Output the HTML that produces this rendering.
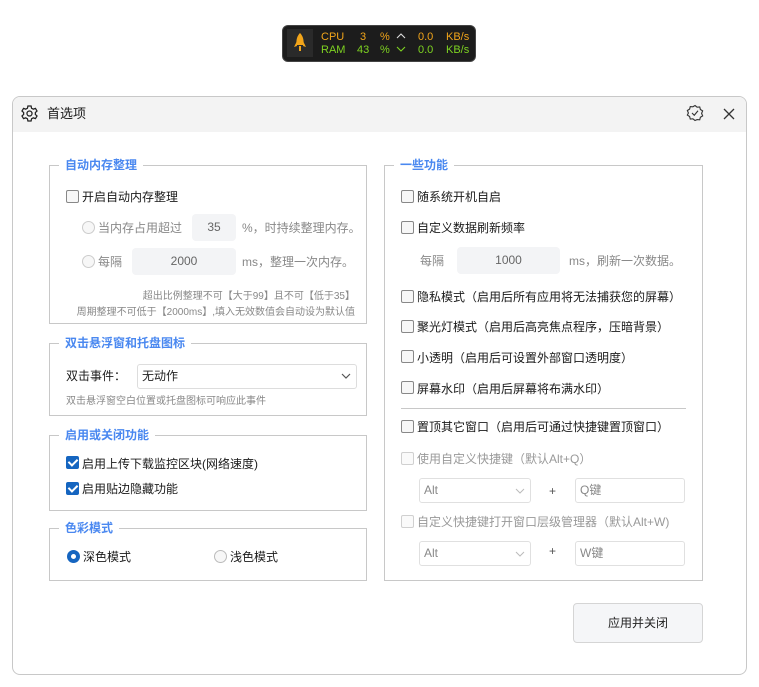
<!DOCTYPE html>
<html><head><meta charset="utf-8"><style>
*{margin:0;padding:0;box-sizing:border-box}
body{width:759px;height:687px;background:#fff;position:relative;overflow:hidden;font-family:"Liberation Sans","Noto Sans CJK SC",sans-serif;font-size:12px;color:#1a1a1a}
.a{position:absolute;white-space:nowrap}
.t{position:absolute;white-space:nowrap;line-height:16px;transform:translateY(-8px)}
.box{position:absolute;border:1px solid #c8c8c8}
.lg{position:absolute;background:#fff;color:#4a88f0;padding:0 6px;line-height:16px;font-size:12px;font-weight:bold}
.cb{position:absolute;width:13px;height:13px;border:1px solid #888;border-radius:2px;background:#f7f7f7}
.cb.d{border-color:#d0d0d0;background:#fafafa}
.cb.on{background:#1565c0;border-color:#1565c0}
.cb.on::after{content:"";position:absolute;left:3px;top:0px;width:4px;height:7px;border:solid #fff;border-width:0 2px 2px 0;transform:rotate(45deg)}
.rd{position:absolute;width:13px;height:13px;border:1px solid #bbb;border-radius:50%;background:#f7f7f7}
.in{position:absolute;background:#f3f4f6;border-radius:4px;color:#666;text-align:center;font-size:12px}
.g{color:#888}
.sel{position:absolute;border:1px solid #e0e0e0;border-radius:3px;background:#fff;color:#888;padding-left:4px}
</style></head><body>
<!-- widget -->
<div class="a" style="left:282px;top:25px;width:194px;height:37px;background:#1c1c1c;border-radius:6px;border:1px solid #444"></div>
<div class="a" style="left:287px;top:29px;width:26px;height:28px;background:#2a2a2a"></div>
<svg class="a" style="left:292px;top:32px" width="16" height="22" viewBox="0 0 16 22"><path d="M8 1 C11 4 12 8 11.5 13 L4.5 13 C4 8 5 4 8 1Z" fill="#f2a51a"/><path d="M4.5 10 L2 15 L5 14Z M11.5 10 L14 15 L11 14Z" fill="#f2a51a"/><rect x="7" y="14" width="2" height="5" fill="#f2a51a"/></svg>
<div class="t" style="left:321px;top:37px;color:#f2a51a;font-size:11px">CPU</div>
<div class="t" style="left:360px;top:37px;color:#f2a51a;font-size:11px">3</div>
<div class="t" style="left:380px;top:37px;color:#f2a51a;font-size:11px">%</div>
<svg class="a" style="left:396px;top:33px" width="10" height="6" viewBox="0 0 10 6"><path d="M1 5l4-4 4 4" fill="none" stroke="#ddd" stroke-width="1.1"/></svg>
<div class="t" style="left:418px;top:37px;color:#f2a51a;font-size:11px">0.0</div>
<div class="t" style="left:446px;top:37px;color:#f2a51a;font-size:11px">KB/s</div>
<div class="t" style="left:321px;top:50px;color:#7ed321;font-size:11px">RAM</div>
<div class="t" style="left:357px;top:50px;color:#7ed321;font-size:11px">43</div>
<div class="t" style="left:380px;top:50px;color:#7ed321;font-size:11px">%</div>
<svg class="a" style="left:396px;top:46px" width="10" height="6" viewBox="0 0 10 6"><path d="M1 1l4 4 4-4" fill="none" stroke="#7ed321" stroke-width="1.1"/></svg>
<div class="t" style="left:418px;top:50px;color:#7ed321;font-size:11px">0.0</div>
<div class="t" style="left:446px;top:50px;color:#7ed321;font-size:11px">KB/s</div>

<!-- dialog -->
<div class="a" style="left:12px;top:96px;width:735px;height:579px;border:1px solid #c8c8c8;border-radius:8px;overflow:hidden">
<div style="height:35px;background:#f3f3f3"></div></div>
<svg class="a" style="left:20px;top:104px" width="19" height="19" viewBox="0 0 24 24" fill="none" stroke="#222" stroke-width="1.6"><path d="M10 2.5h4l.6 2.8 2.2 1.2 2.7-1 2 3.4-2.1 1.9v2.4l2.1 1.9-2 3.4-2.7-1-2.2 1.2-.6 2.8h-4l-.6-2.8-2.2-1.2-2.7 1-2-3.4 2.1-1.9v-2.4L2.5 8.9l2-3.4 2.7 1 2.2-1.2z"/><circle cx="12" cy="12" r="3.2"/></svg>
<div class="t" style="left:47px;top:114px;font-size:13px">首选项</div>
<svg class="a" style="left:686px;top:104px" width="18" height="18" viewBox="0 0 24 24" fill="none" stroke="#333" stroke-width="1.5"><path d="M12 2l2.8 2.2 3.5-.3.9 3.4 3 1.9-1.4 3.3 1.4 3.3-3 1.9-.9 3.4-3.5-.3L12 22l-2.8-2.2-3.5.3-.9-3.4-3-1.9L3.2 12 1.8 8.7l3-1.9.9-3.4 3.5.3z"/><path d="M8 12l3 3 5-6"/></svg>
<svg class="a" style="left:723px;top:108px" width="12" height="12" viewBox="0 0 12 12" stroke="#333" stroke-width="1.3"><path d="M1 1L11 11M11 1L1 11"/></svg>

<!-- group 1 -->
<div class="box" style="left:49px;top:165px;width:318px;height:159px"></div>
<div class="lg" style="left:59px;top:157px">自动内存整理</div>
<div class="cb" style="left:66px;top:190px"></div>
<div class="t" style="left:82px;top:197px">开启自动内存整理</div>
<div class="rd" style="left:82px;top:221px;border-color:#ccc"></div>
<div class="t g" style="left:98px;top:228px">当内存占用超过</div>
<div class="in" style="left:192px;top:214px;width:44px;height:27px;line-height:27px">35</div>
<div class="t g" style="left:242px;top:228px">%，时持续整理内存。</div>
<div class="rd" style="left:82px;top:255px;border-color:#ccc"></div>
<div class="t g" style="left:98px;top:262px">每隔</div>
<div class="in" style="left:132px;top:248px;width:104px;height:27px;line-height:27px">2000</div>
<div class="t g" style="left:242px;top:262px">ms，整理一次内存。</div>
<div class="t g" style="right:404px;top:297px;font-size:10px">超出比例整理不可【大于99】且不可【低于35】</div>
<div class="t g" style="right:404px;top:313px;font-size:10px">周期整理不可低于【2000ms】,填入无效数值会自动设为默认值</div>

<!-- group 2 -->
<div class="box" style="left:49px;top:343px;width:318px;height:73px"></div>
<div class="lg" style="left:59px;top:335px">双击悬浮窗和托盘图标</div>
<div class="t" style="left:66px;top:376px">双击事件：</div>
<div class="sel" style="left:137px;top:364px;width:220px;height:25px;line-height:23px;color:#222;border-color:#ddd">无动作</div>
<svg class="a" style="left:341px;top:372px" width="10" height="8" viewBox="0 0 10 8"><path d="M1 2l4 4 4-4" fill="none" stroke="#555" stroke-width="1.2"/></svg>
<div class="t g" style="left:66px;top:402px;font-size:10px">双击悬浮窗空白位置或托盘图标可响应此事件</div>

<!-- group 3 -->
<div class="box" style="left:49px;top:435px;width:318px;height:76px"></div>
<div class="lg" style="left:59px;top:427px">启用或关闭功能</div>
<div class="cb on" style="left:66px;top:456px"></div>
<div class="t" style="left:82px;top:464px">启用上传下载监控区块(网络速度)</div>
<div class="cb on" style="left:66px;top:482px"></div>
<div class="t" style="left:82px;top:489px">启用贴边隐藏功能</div>

<!-- group 4 -->
<div class="box" style="left:49px;top:528px;width:318px;height:53px"></div>
<div class="lg" style="left:59px;top:520px">色彩模式</div>
<div class="rd" style="left:67px;top:550px;border:4px solid #1565c0;background:#fff"></div>
<div class="t" style="left:83px;top:557px">深色模式</div>
<div class="rd" style="left:214px;top:550px"></div>
<div class="t" style="left:230px;top:557px">浅色模式</div>

<!-- right group -->
<div class="box" style="left:384px;top:165px;width:319px;height:416px"></div>
<div class="lg" style="left:394px;top:157px">一些功能</div>
<div class="cb" style="left:401px;top:190px"></div>
<div class="t" style="left:417px;top:197px">随系统开机自启</div>
<div class="cb" style="left:401px;top:221px"></div>
<div class="t" style="left:417px;top:228px">自定义数据刷新频率</div>
<div class="t g" style="left:420px;top:261px">每隔</div>
<div class="in" style="left:457px;top:247px;width:103px;height:27px;line-height:27px">1000</div>
<div class="t g" style="left:569px;top:261px">ms，刷新一次数据。</div>
<div class="cb" style="left:401px;top:290px"></div>
<div class="t" style="left:417px;top:297px">隐私模式（启用后所有应用将无法捕获您的屏幕）</div>
<div class="cb" style="left:401px;top:320px"></div>
<div class="t" style="left:417px;top:327px">聚光灯模式（启用后高亮焦点程序，压暗背景）</div>
<div class="cb" style="left:401px;top:350px"></div>
<div class="t" style="left:417px;top:358px">小透明（启用后可设置外部窗口透明度）</div>
<div class="cb" style="left:401px;top:381px"></div>
<div class="t" style="left:417px;top:389px">屏幕水印（启用后屏幕将布满水印）</div>
<div class="a" style="left:401px;top:408px;width:285px;height:1px;background:#c8c8c8"></div>
<div class="cb" style="left:401px;top:420px"></div>
<div class="t" style="left:417px;top:427px">置顶其它窗口（启用后可通过快捷键置顶窗口）</div>
<div class="cb d" style="left:401px;top:452px"></div>
<div class="t" style="left:417px;top:459px;color:#999">使用自定义快捷键（默认Alt+Q）</div>
<div class="sel" style="left:419px;top:478px;width:112px;height:25px;line-height:23px">Alt</div>
<svg class="a" style="left:515px;top:487px" width="10" height="8" viewBox="0 0 10 8"><path d="M1 2l4 4 4-4" fill="none" stroke="#bbb" stroke-width="1"/></svg>
<div class="t" style="left:549px;top:491px;color:#555">+</div>
<div class="sel" style="left:575px;top:478px;width:110px;height:25px;line-height:23px">Q键</div>
<div class="cb d" style="left:401px;top:515px"></div>
<div class="t" style="left:417px;top:522px;color:#999">自定义快捷键打开窗口层级管理器（默认Alt+W)</div>
<div class="sel" style="left:419px;top:541px;width:112px;height:25px;line-height:23px">Alt</div>
<svg class="a" style="left:515px;top:550px" width="10" height="8" viewBox="0 0 10 8"><path d="M1 2l4 4 4-4" fill="none" stroke="#bbb" stroke-width="1"/></svg>
<div class="t" style="left:549px;top:551px;color:#555">+</div>
<div class="sel" style="left:575px;top:541px;width:110px;height:25px;line-height:23px">W键</div>

<div class="a" style="left:573px;top:603px;width:130px;height:40px;background:#f5f6f8;border:1px solid #d5d5d5;border-radius:4px;text-align:center;line-height:38px;color:#222">应用并关闭</div>
</body></html>
